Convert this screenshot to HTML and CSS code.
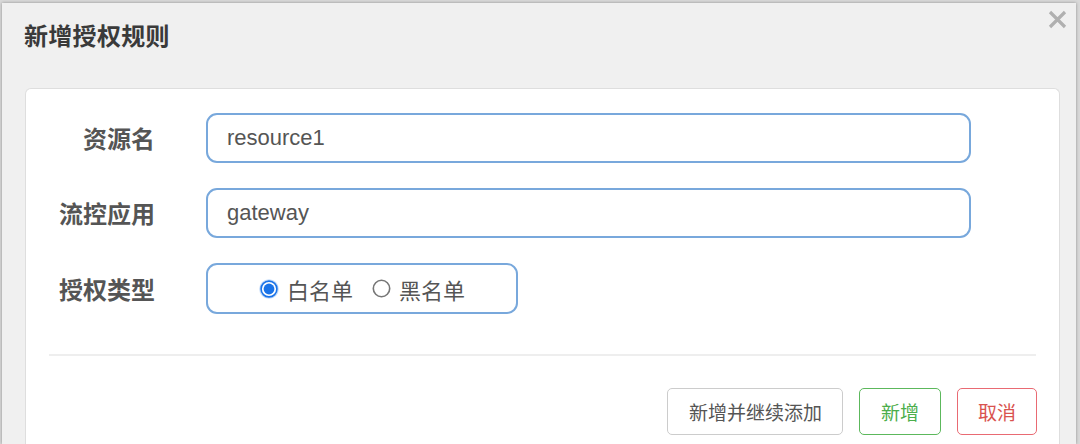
FILE: index.html
```html
<!DOCTYPE html>
<html lang="zh-CN">
<head>
<meta charset="utf-8">
<title>新增授权规则</title>
<link rel="stylesheet" href="styles.css">
</head>
<body>
<div class="dialog">
  <div class="dialog-header">
    <h1 class="dialog-title">新增授权规则</h1>
    <button class="close-btn" aria-label="关闭">
      <svg width="19" height="19" viewBox="0 0 19 19"><path d="M2 2 L17 17 M17 2 L2 17" stroke="#b0b0b0" stroke-width="3.2" stroke-linecap="butt" fill="none"/></svg>
    </button>
  </div>
  <div class="card">
    <div class="form-row">
      <label class="form-label">资源名</label>
      <div class="form-input">resource1</div>
    </div>
    <div class="form-row">
      <label class="form-label">流控应用</label>
      <div class="form-input">gateway</div>
    </div>
    <div class="form-row">
      <label class="form-label">授权类型</label>
      <div class="radio-group">
        <span class="radio-item">
          <svg class="radio-icon" width="20" height="20" viewBox="0 0 20 20"><circle cx="10" cy="10" r="9.8" fill="#c4dcfa"/><circle cx="10" cy="10" r="7.9" fill="#ffffff" stroke="#1a73e8" stroke-width="1.6"/><circle cx="10" cy="10" r="5.4" fill="#1a73e8"/></svg>
          <span class="radio-text">白名单</span>
        </span>
        <span class="radio-item">
          <svg class="radio-icon" width="19" height="19" viewBox="0 0 19 19"><circle cx="9.5" cy="9.5" r="8.2" fill="#ffffff" stroke="#767676" stroke-width="1.6"/></svg>
          <span class="radio-text">黑名单</span>
        </span>
      </div>
    </div>
    <div class="divider"></div>
    <div class="actions">
      <button class="btn btn-default">新增并继续添加</button>
      <button class="btn btn-success">新增</button>
      <button class="btn btn-danger">取消</button>
    </div>
  </div>
</div>
</body>
</html>
```
FILE: styles.css
```css
html, body {
  margin: 0;
  padding: 0;
}
body {
  background: #d9d9d9;
  font-family: "Noto Sans CJK SC", "Liberation Sans", sans-serif;
  overflow: hidden;
  height: 444px;
}
.dialog {
  margin: 3px 4px 0 2px;
  background: #f0f0f0;
  box-shadow: 0 0 3px rgba(0, 0, 0, 0.35);
  height: 441px;
  box-sizing: border-box;
}
.dialog-header {
  display: flex;
  justify-content: space-between;
  align-items: flex-start;
  height: 85px;
  padding: 0 9px 0 22px;
  box-sizing: border-box;
}
.dialog-title {
  margin: 0;
  padding-top: 16px;
  font-size: 24px;
  line-height: 32px;
  font-weight: 700;
  color: #3a3a3a;
  letter-spacing: 0.3px;
}
.close-btn {
  border: none;
  background: transparent;
  padding: 0;
  margin-top: 7px;
  width: 19px;
  height: 19px;
  display: block;
}
.close-btn svg {
  display: block;
}
.card {
  margin: 0 16px 0 23px;
  background: #ffffff;
  border: 1px solid #dedede;
  border-bottom: none;
  border-radius: 6px 6px 0 0;
  padding: 24px 23px 0 23px;
  height: 356px;
  box-sizing: border-box;
}
.form-row {
  display: flex;
  align-items: center;
  gap: 51px;
  margin-bottom: 25px;
}
.form-row:last-of-type {
  margin-bottom: 0;
}
.form-label {
  width: 106px;
  text-align: right;
  font-size: 24px;
  font-weight: 700;
  color: #555555;
  line-height: 30px;
}
.form-input {
  width: 765px;
  height: 50px;
  box-sizing: border-box;
  border: 2px solid #78a8dc;
  border-radius: 11px;
  padding: 0 19px;
  font-family: "Liberation Sans", Arial, sans-serif;
  font-size: 22px;
  color: #555555;
  display: flex;
  align-items: center;
}
.radio-group {
  width: 312px;
  height: 51px;
  box-sizing: border-box;
  border: 2px solid #78a8dc;
  border-radius: 11px;
  display: flex;
  align-items: center;
  justify-content: center;
  gap: 19px;
}
.radio-item {
  display: flex;
  align-items: center;
  gap: 8px;
}
.radio-icon {
  display: block;
}
.radio-text {
  font-size: 22px;
  color: #555555;
  line-height: 28px;
}
.divider {
  height: 2px;
  background: #eeeeee;
  margin: 40px 0 0 0;
}
.actions {
  display: flex;
  justify-content: flex-end;
  gap: 16px;
  margin-top: 32px;
  margin-right: -1px;
}
.btn {
  height: 47px;
  box-sizing: border-box;
  border-radius: 5px;
  background: #ffffff;
  font-family: "Noto Sans CJK SC", sans-serif;
  font-size: 19px;
  padding: 0 20px;
  line-height: 45px;
}
.btn-default {
  border: 1px solid #cccccc;
  color: #555555;
  padding: 0 20px 0 21px;
}
.btn-success {
  border: 1px solid #5cb85c;
  color: #4cae4c;
  padding: 0 21px;
}
.btn-danger {
  border: 1px solid #e96a73;
  color: #d9534f;
  padding: 0 20px;
}
```
